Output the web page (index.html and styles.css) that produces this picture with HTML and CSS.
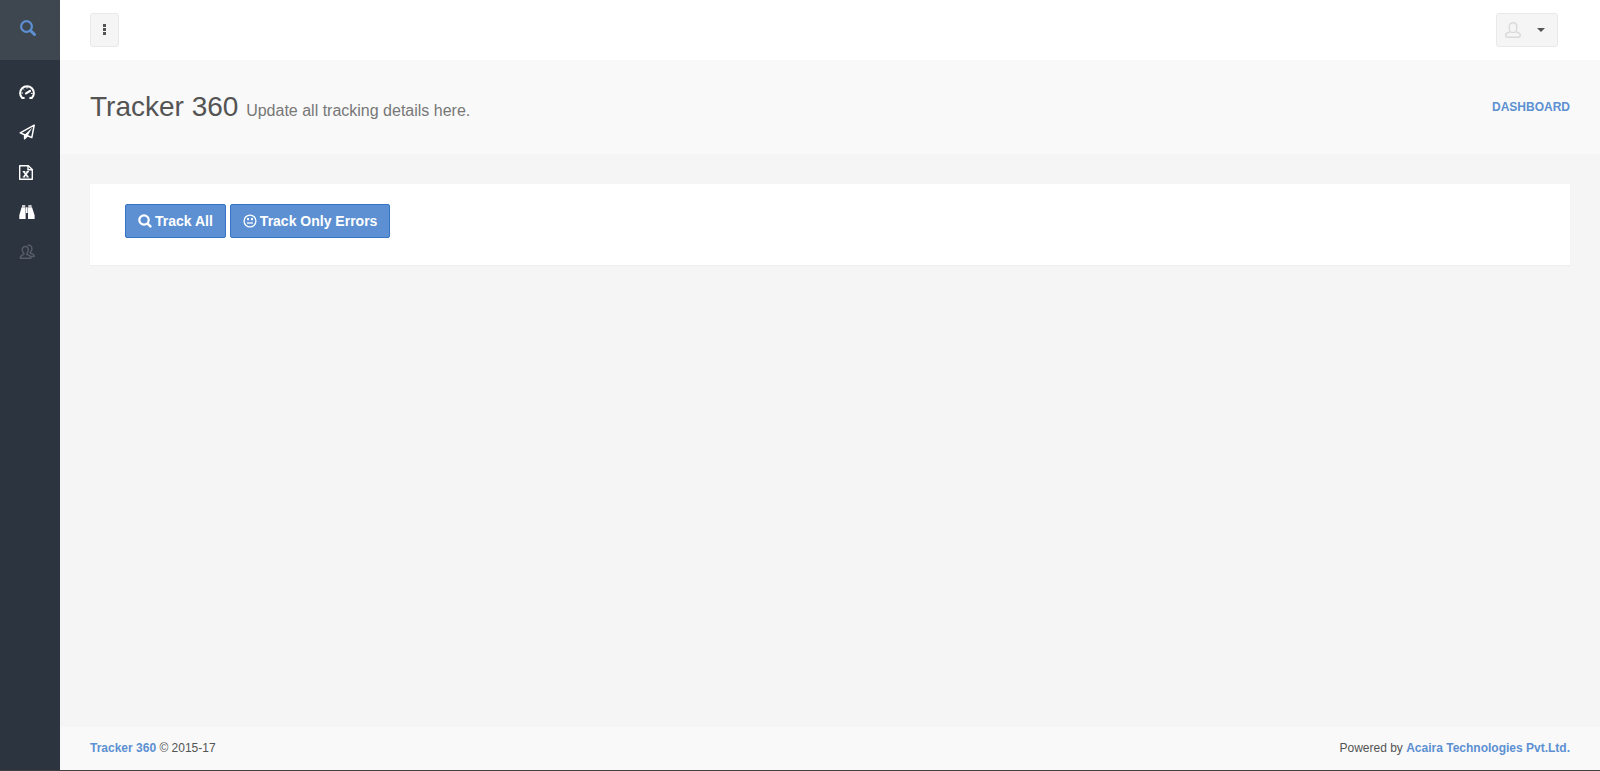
FILE: index.html
```html
<!DOCTYPE html>
<html lang="en">
<head>
    <meta charset="UTF-8">
    <meta name="viewport" content="width=device-width, initial-scale=1.0">
    <title>Tracker 360</title>
    <link rel="stylesheet" href="styles.css">
</head>
<body>

    <aside class="sidebar">
        <button type="button" class="sidebar-search" aria-label="Search">
            <svg viewBox="0 0 16 16" fill="none" stroke="currentColor">
                <circle cx="6.5" cy="6.5" r="5.4" stroke-width="2.2"/>
                <path d="M10.7 10.7L14.5 14.5" stroke-width="3" stroke-linecap="round"/>
            </svg>
        </button>
        <nav class="sidebar-nav">
            <a href="#" aria-label="Dashboard">
                <svg viewBox="0 0 16 16" fill="none" stroke="currentColor" stroke-width="2">
                    <path d="M5.6 13.6L4.6 14H3.2A6.9 6.9 0 1 1 12.8 14H11.4L10.4 13.6"/>
                    <path d="M7 9.4L11 7" stroke-width="2.2" stroke-linecap="round"/>
                    <path d="M2.4 9h1.6M4.4 5l.9.9M8 3v1.6M12 9.4h1.6" stroke-width="1"/>
                </svg>
            </a>
            <a href="#" aria-label="Send">
                <svg viewBox="0 0 16 16">
                    <path d="M15.2 1.2L12.8 13.6L8.6 11.8L5.6 14.8V10.7L1.2 8.9Z" fill="none" stroke="currentColor" stroke-width="1.5" stroke-linejoin="round"/>
                    <path d="M5.6 10.7L13.4 3.4L8.6 11.8L5.6 14.8Z" fill="currentColor"/>
                </svg>
            </a>
            <a href="#" aria-label="Spreadsheet">
                <svg viewBox="0 0 16 16" fill="none" stroke="currentColor" stroke-width="1.4">
                    <path d="M.7 1.7H9.3L13.3 5.5V15.3H.7Z" stroke-linejoin="round"/>
                    <path d="M9 1.7V5.8H13.3" stroke-width="1.4"/>
                    <path d="M4.8 7.8L8.8 12.8M8.8 7.8L4.8 12.8" stroke-width="1.6"/>
                    <path d="M3.7 7.6H6.3M7.4 7.6H9.9M3.7 13H6.3M7.4 13H9.9" stroke-width="1.1"/>
                </svg>
            </a>
            <a href="#" aria-label="Find">
                <svg viewBox="0 0 16 16" fill="currentColor">
                    <path d="M3 1.2h3.3v1.5H3zM9.3 1.2h3.3v1.5H9.3zM2.6 3.2H6.6V15H.3V11.2zM13 3.2H9V15H15.6V11.2zM7 3.2H8.6V9H7z"/>
                </svg>
            </a>
            <a href="#" class="muted" aria-label="Users">
                <svg viewBox="0 0 16 16" fill="none" stroke="currentColor" stroke-width="1.5" stroke-linejoin="round">
                    <path d="M6.3 2.6C8.3 2.6 9.4 4 9.3 6C9.2 7.8 8.6 8.9 7.8 9.6V10.4C10 10.9 12 11.5 12 14.2H1.3C1.3 11.6 3 10.9 4.8 10.4V9.6C4 8.9 3.4 7.8 3.3 6C3.2 4 4.3 2.6 6.3 2.6Z"/>
                    <path d="M8.5 1.4C11.2.6 13 2 12.9 4.8C12.8 6.5 12.3 7.7 11.3 8.4V9.2C13.4 9.7 15.2 10.3 15.2 12.4H12"/>
                </svg>
            </a>
        </nav>
    </aside>

    <div class="page">
        <header class="topbar">
            <button type="button" class="btn-default btn-toggle" aria-label="Toggle menu">
                <svg viewBox="0 0 3 11" fill="currentColor">
                    <path d="M0 0h3v3H0zM0 4h3v3H0zM0 8h3v3H0z"/>
                </svg>
            </button>
            <button type="button" class="btn-default btn-user" aria-label="User menu">
                <svg class="avatar" viewBox="0 0 16 16" fill="none" stroke="currentColor" stroke-width="1.4">
                    <path d="M5.4 9.7C4.6 8.8 4.2 7.4 4.2 5.2C4.2 2.3 5.5.8 8 .8S11.8 2.3 11.8 5.2C11.8 7.4 11.4 8.8 10.6 9.7C9.5 10.6 6.5 10.6 5.4 9.7Z"/>
                    <path d="M5 10C2.5 10.5.7 11.2.7 13.2C.7 14.8 1.6 15.3 3 15.3H13C14.4 15.3 15.3 14.8 15.3 13.2C15.3 11.2 13.5 10.5 11 10"/>
                </svg>
                <span class="caret"></span>
            </button>
        </header>

        <section class="page-heading">
            <h1>Tracker 360 <small>Update all tracking details here.</small></h1>
            <a href="#" class="breadcrumb">Dashboard</a>
        </section>

        <main class="content">
            <div class="block">
                <button type="button" class="btn-primary">
                    <svg viewBox="0 0 14 14" fill="none" stroke="currentColor">
                        <circle cx="6" cy="6" r="4.7" stroke-width="2.2"/>
                        <path d="M9.6 9.6L12.4 12.4" stroke-width="2.4" stroke-linecap="round"/>
                    </svg>
                    Track All
                </button>
                <button type="button" class="btn-primary">
                    <svg viewBox="0 0 14 14" fill="none" stroke="currentColor" stroke-width="1.3">
                        <circle cx="7" cy="7" r="5.9"/>
                        <path d="M4 9H10"/>
                        <path d="M5 4v2.2M9 4v2.2" stroke-width="1.9"/>
                    </svg>
                    Track Only Errors
                </button>
            </div>
        </main>

        <footer class="footer">
            <span><a href="#">Tracker 360</a> © 2015-17</span>
            <span>Powered by <a href="#">Acaira Technologies Pvt.Ltd.</a></span>
        </footer>
    </div>

</body>
</html>
```
FILE: styles.css
```css
:root {
    --primary: #5c90d2;
    --primary-border: #3675c5;
    --sidebar-bg: #2c343f;
    --sidebar-top: #3e464f;
    --body-bg: #f5f5f5;
    --panel-bg: #f9f9f9;
    --text: #545454;
}

* {
    box-sizing: border-box;
}

body {
    margin: 0;
    min-height: 100vh;
    display: flex;
    font-family: "Liberation Sans", Arial, sans-serif;
    font-size: 14px;
    line-height: 20px;
    color: var(--text);
    background-color: var(--body-bg);
    border-bottom: 1px solid #414045;
}

a {
    color: var(--primary);
    font-weight: 600;
    text-decoration: none;
}

button {
    font-family: inherit;
    cursor: pointer;
}

svg {
    display: block;
    flex: none;
}

/* Sidebar */
.sidebar {
    flex: none;
    width: 60px;
    background-color: var(--sidebar-bg);
}

.sidebar svg {
    width: 16px;
    height: 16px;
}

.sidebar-search {
    display: flex;
    align-items: center;
    width: 100%;
    height: 60px;
    padding: 0 20px 4px;
    border: none;
    color: var(--primary);
    background-color: var(--sidebar-top);
}

.sidebar-nav {
    padding-top: 12px;
}

.sidebar-nav a {
    display: flex;
    align-items: center;
    height: 40px;
    padding-left: 19px;
    color: #fff;
}

.sidebar-nav .muted {
    color: #565d66;
}

/* Page */
.page {
    flex: 1;
    display: flex;
    flex-direction: column;
}

.topbar {
    display: flex;
    align-items: center;
    justify-content: space-between;
    height: 60px;
    padding: 0 42px 0 30px;
    background-color: #fff;
}

.btn-default {
    display: flex;
    align-items: center;
    height: 34px;
    color: var(--text);
    background-color: #f5f5f5;
    border: 1px solid #e9e9e9;
    border-radius: 3px;
}

.btn-toggle {
    padding: 0 12px 1px;
}

.btn-toggle svg {
    width: 3px;
    height: 11px;
}

.btn-user {
    gap: 16px;
    padding: 0 12px 0 8px;
}

.avatar {
    width: 16px;
    height: 16px;
    color: #dadada;
}

.caret {
    border-top: 4px solid var(--text);
    border-left: 4px solid transparent;
    border-right: 4px solid transparent;
}

.page-heading {
    display: flex;
    align-items: center;
    justify-content: space-between;
    padding: 30px;
    background-color: var(--panel-bg);
}

.page-heading h1 {
    margin: 0;
    font-size: 28px;
    font-weight: 400;
    line-height: 34px;
}

.page-heading small {
    font-size: 16px;
    line-height: 20px;
    color: #777;
}

.breadcrumb {
    font-size: 12px;
    text-transform: uppercase;
}

.content {
    flex: 1;
    padding: 30px;
}

.block {
    display: flex;
    gap: 4px;
    padding: 20px 35px 27px;
    background-color: #fff;
    box-shadow: 0 1px 1px #efefef;
}

.btn-primary {
    display: flex;
    align-items: center;
    gap: 3px;
    height: 34px;
    padding: 0 12px;
    font-size: 14px;
    font-weight: 600;
    color: #fff;
    background-color: var(--primary);
    border: 1px solid var(--primary-border);
    border-radius: 2px;
}

.btn-primary svg {
    width: 14px;
    height: 14px;
}

.footer {
    display: flex;
    justify-content: space-between;
    padding: 11px 30px 12px;
    font-size: 12px;
    background-color: var(--panel-bg);
}
```
